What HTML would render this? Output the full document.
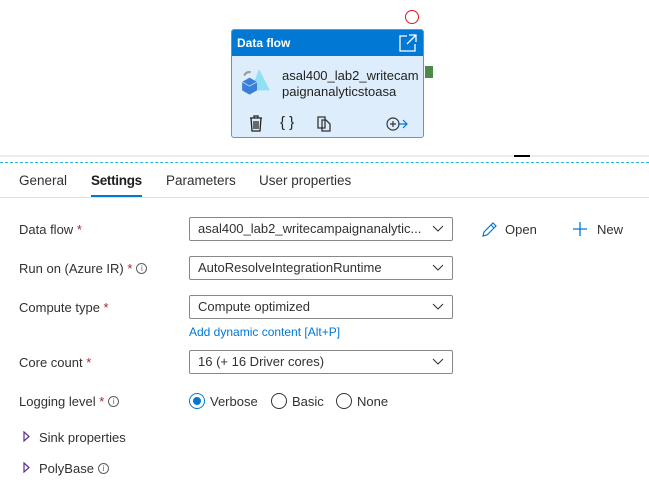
<!DOCTYPE html>
<html><head><style>
body{margin:0;width:649px;height:482px;background:#fff;font-family:"Liberation Sans",sans-serif;position:relative;overflow:hidden;color:#323130}
.a{position:absolute}
.lbl{position:absolute;left:19px;font-size:13px;color:#323130}
.lbl .s{color:#a4262c}
.sel{position:absolute;left:189px;width:254px;height:22px;border:1px solid #8a8886;border-radius:2px;font-size:13px;line-height:22px;padding-left:8px;box-sizing:content-box;color:#323130}
.sel svg{position:absolute;right:8px;top:7px}
.info{display:inline-block;width:9px;height:9px;border:1px solid #605e5c;border-radius:50%;font-size:8px;line-height:9px;text-align:center;vertical-align:2px;margin-left:4px;color:#605e5c}
.radio{position:absolute;width:16px;height:16px;border:1px solid #323130;border-radius:50%;box-sizing:border-box}
</style></head><body>
<div class="a" style="left:405px;top:10px;width:14px;height:14px;border:1.5px solid #e81123;border-radius:50%;box-sizing:border-box"></div>
<div class="a" style="left:231px;top:29px;width:193px;height:109px;border:1px solid #5a9bc4;border-radius:3px;background:#deedfb;box-sizing:border-box;overflow:hidden">
 <div style="height:26px;background:#0078d4;color:#fff;font-size:12px;font-weight:bold;line-height:26px;padding-left:5px">Data flow
  <svg style="position:absolute;right:6px;top:4px" width="18" height="18" viewBox="0 0 18 18" fill="none" stroke="#fff" stroke-width="1.3"><path d="M8 2H1v15h15V10M10 1h7v7M17 1L8 10"/></svg></div>
 <svg style="position:absolute;left:8px;top:37px" width="34" height="34" viewBox="0 0 32 32"><path d="M4 8q2-4 6-3" stroke="#999" stroke-width="2" fill="none"/><path d="M18 2L28 22H10z" fill="#8fe0f5"/><path d="M2 14l7-4 7 4v8l-7 4-7-4z" fill="#3a7fd9"/><path d="M2 14l7 4 7-4" fill="none" stroke="#9cc4f0"/></svg>
 <div style="position:absolute;left:50px;top:38px;font-size:13px;line-height:16px;color:#201f1e">asal400_lab2_writecam<br>paignanalyticstoasa</div>
 <svg style="position:absolute;left:17px;top:85px" width="14" height="17" viewBox="0 0 14 17" fill="none" stroke="#222" stroke-width="1.3"><path d="M1 3h12M5 3V1h4v2M2 3l1 13h8l1-13M5 6v8M7 6v8M9 6v8"/></svg>
 <div style="position:absolute;left:48px;top:84px;font-size:15px;color:#222">{ }</div>
 <svg style="position:absolute;left:85px;top:86px" width="14" height="16" viewBox="0 0 14 16" fill="none" stroke="#333" stroke-width="1.3"><path d="M1 1h7v11H1zM5 4h4l4 4v7H5z"/></svg>
 <svg style="position:absolute;left:154px;top:87px" width="22" height="14" viewBox="0 0 22 14" fill="none" stroke-width="1.2"><circle cx="7" cy="7" r="6" stroke="#333"/><path d="M4 7h6M7 4v6" stroke="#333"/><path d="M12 7h9M17 3l4 4-4 4" stroke="#0078d4"/></svg>
</div>
<div class="a" style="left:425px;top:66px;width:8px;height:12px;background:#4c8a4c"></div>
<div class="a" style="left:0;top:155px;width:649px;height:2px;background:#edebe9"></div>
<div class="a" style="left:514px;top:155px;width:16px;height:2px;background:#000"></div>
<div class="a" style="left:0;top:162px;width:649px;border-top:1px dashed #22b5e6"></div>
<div class="a" style="top:173px;left:19px;font-size:13.5px;color:#323130">General</div>
<div class="a" style="top:173px;left:91px;font-size:13.5px;color:#201f1e;font-weight:bold;letter-spacing:-0.3px">Settings</div>
<div class="a" style="left:91px;top:195px;width:51px;height:2px;background:#0078d4"></div>
<div class="a" style="top:173px;left:166px;font-size:13.5px">Parameters</div>
<div class="a" style="top:173px;left:259px;font-size:13.5px">User properties</div>
<div class="a" style="left:0;top:197px;width:649px;height:1px;background:#e1dfdd"></div>

<div class="lbl" style="top:222px">Data flow <span class="s">*</span></div>
<div class="sel" style="top:217px">asal400_lab2_writecampaignanalytic...<svg width="12" height="8" viewBox="0 0 12 8"><path d="M1 1l5 5 5-5" stroke="#323130" fill="none"/></svg></div>
<svg class="a" style="left:481px;top:221px" width="17" height="17" viewBox="0 0 17 17" fill="none" stroke="#0078d4" stroke-width="1.2"><path d="M2 15l1-4 9-9 3 3-9 9zM10 4l3 3"/></svg>
<div class="a" style="left:505px;top:222px;font-size:13px">Open</div>
<svg class="a" style="left:572px;top:221px" width="16" height="16" viewBox="0 0 16 16" stroke="#0078d4" stroke-width="1.3"><path d="M8 1v14M1 8h14"/></svg>
<div class="a" style="left:597px;top:222px;font-size:13px">New</div>

<div class="lbl" style="top:261px">Run on (Azure IR) <span class="s">*</span><span class="info">i</span></div>
<div class="sel" style="top:256px">AutoResolveIntegrationRuntime<svg width="12" height="8" viewBox="0 0 12 8"><path d="M1 1l5 5 5-5" stroke="#323130" fill="none"/></svg></div>

<div class="lbl" style="top:300px">Compute type <span class="s">*</span></div>
<div class="sel" style="top:295px">Compute optimized<svg width="12" height="8" viewBox="0 0 12 8"><path d="M1 1l5 5 5-5" stroke="#323130" fill="none"/></svg></div>
<div class="a" style="left:189px;top:325px;font-size:12px;color:#0078d4">Add dynamic content [Alt+P]</div>

<div class="lbl" style="top:355px">Core count <span class="s">*</span></div>
<div class="sel" style="top:350px">16 (+ 16 Driver cores)<svg width="12" height="8" viewBox="0 0 12 8"><path d="M1 1l5 5 5-5" stroke="#323130" fill="none"/></svg></div>

<div class="lbl" style="top:394px">Logging level <span class="s">*</span><span class="info">i</span></div>
<div class="radio" style="left:189px;top:393px;border-color:#0078d4"><div style="margin:3px;width:8px;height:8px;border-radius:50%;background:#0078d4"></div></div>
<div class="a" style="left:210px;top:394px;font-size:13px">Verbose</div>
<div class="radio" style="left:271px;top:393px"></div>
<div class="a" style="left:292px;top:394px;font-size:13px">Basic</div>
<div class="radio" style="left:336px;top:393px"></div>
<div class="a" style="left:357px;top:394px;font-size:13px">None</div>

<svg class="a" style="left:23px;top:431px" width="7" height="11" viewBox="0 0 7 11"><path d="M1 1l5 4.5L1 10z" fill="none" stroke="#5c2e91" stroke-width="1.2"/></svg>
<div class="a" style="left:39px;top:430px;font-size:13px">Sink properties</div>
<svg class="a" style="left:23px;top:462px" width="7" height="11" viewBox="0 0 7 11"><path d="M1 1l5 4.5L1 10z" fill="none" stroke="#5c2e91" stroke-width="1.2"/></svg>
<div class="a" style="left:39px;top:461px;font-size:13px">PolyBase<span class="info">i</span></div>
</body></html>
